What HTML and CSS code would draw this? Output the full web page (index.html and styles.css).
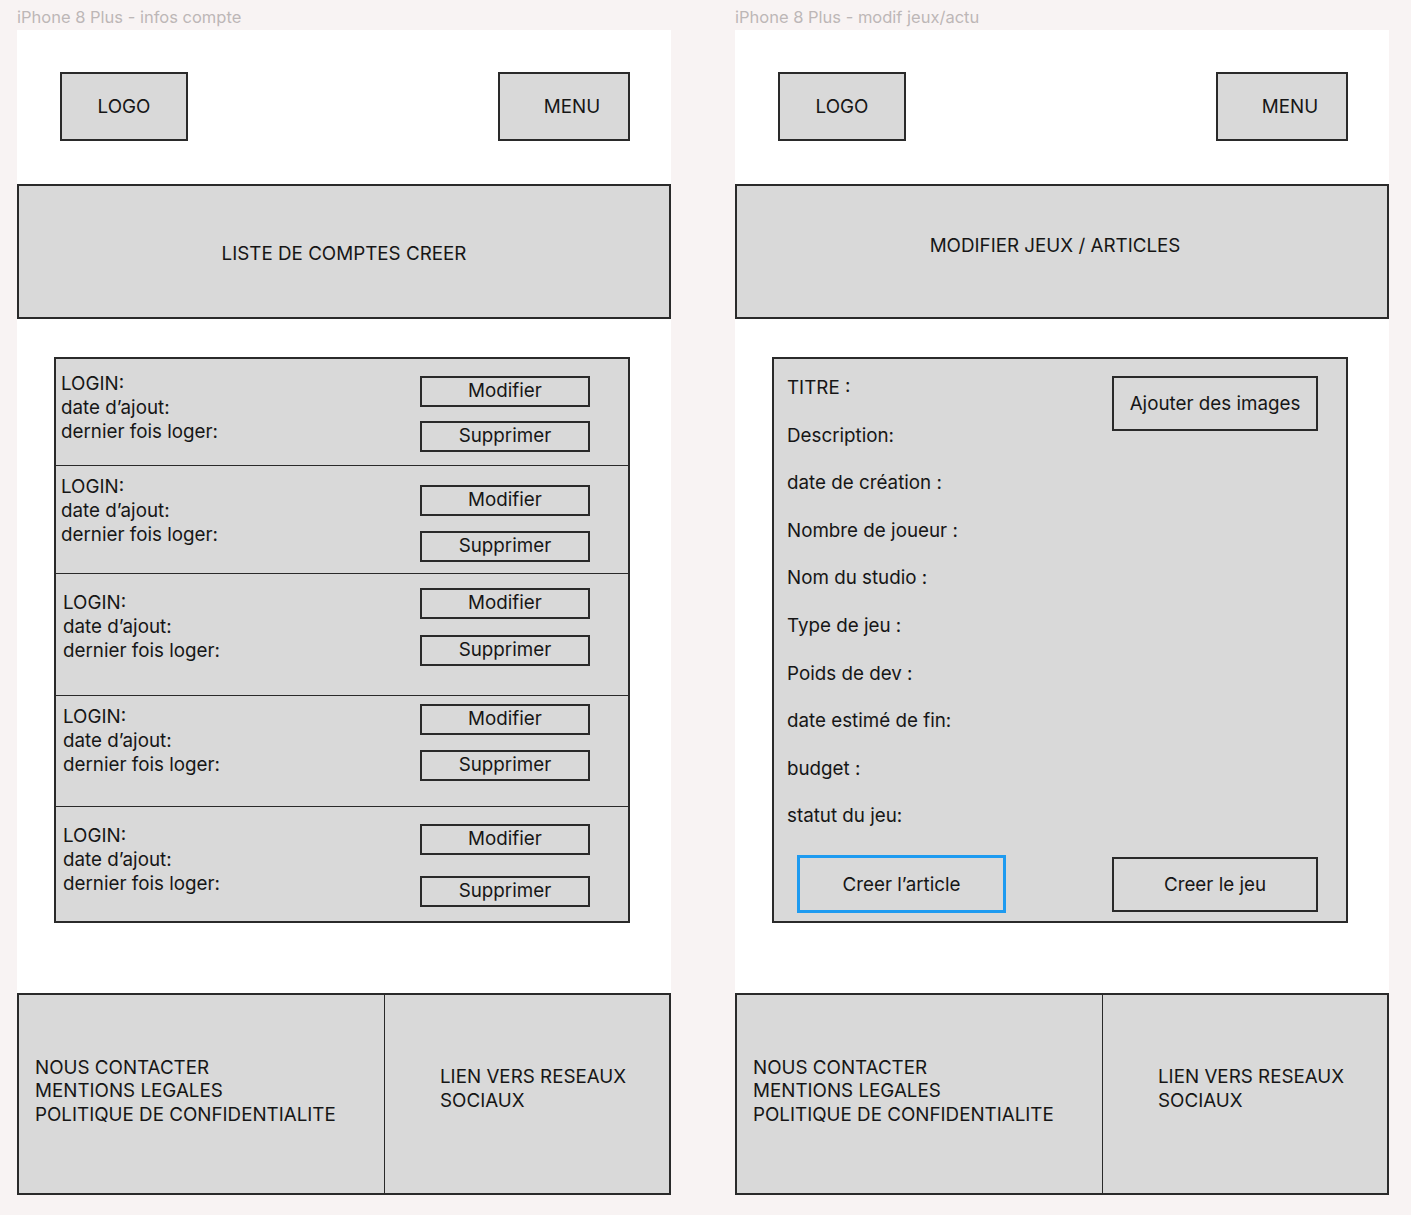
FILE: index.html
```html
<!DOCTYPE html>
<html lang="fr">
<head>
    <meta charset="UTF-8">
    <title>Maquettes</title>
    <link rel="stylesheet" href="styles.css">
</head>
<body>
<div class="canvas">
    <!-- maquette 1 : comptes -->
    <div class="board">
        <div class="boardName">iPhone 8 Plus - infos compte</div>
        <div class="frame">
            <div class="header">
                <div class="box logo">LOGO</div>
                <div class="box menu">MENU</div>
            </div>
            <div class="banner">LISTE DE COMPTES CREER</div>

            <div class="list">
                <div class="row row1">
                    <div class="info">LOGIN:<br>date d’ajout:<br>dernier fois loger:</div>
                    <div class="actions">
                        <div class="btn">Modifier</div>
                        <div class="btn">Supprimer</div>
                    </div>
                </div>
                <div class="row row2">
                    <div class="info">LOGIN:<br>date d’ajout:<br>dernier fois loger:</div>
                    <div class="actions">
                        <div class="btn">Modifier</div>
                        <div class="btn">Supprimer</div>
                    </div>
                </div>
                <div class="row row3">
                    <div class="info">LOGIN:<br>date d’ajout:<br>dernier fois loger:</div>
                    <div class="actions">
                        <div class="btn">Modifier</div>
                        <div class="btn">Supprimer</div>
                    </div>
                </div>
                <div class="row row4">
                    <div class="info">LOGIN:<br>date d’ajout:<br>dernier fois loger:</div>
                    <div class="actions">
                        <div class="btn">Modifier</div>
                        <div class="btn">Supprimer</div>
                    </div>
                </div>
                <div class="row row5">
                    <div class="info">LOGIN:<br>date d’ajout:<br>dernier fois loger:</div>
                    <div class="actions">
                        <div class="btn">Modifier</div>
                        <div class="btn">Supprimer</div>
                    </div>
                </div>
            </div>

            <div class="footer">
                <div class="footLeft">NOUS CONTACTER<br>MENTIONS LEGALES<br>POLITIQUE DE CONFIDENTIALITE</div>
                <div class="footRight">LIEN VERS RESEAUX<br>SOCIAUX</div>
            </div>
        </div>
    </div>

    <!-- maquette 2 : jeux / articles -->
    <div class="board">
        <div class="boardName">iPhone 8 Plus - modif jeux/actu</div>
        <div class="frame">
            <div class="header">
                <div class="box logo">LOGO</div>
                <div class="box menu">MENU</div>
            </div>
            <div class="banner bannerUp">MODIFIER JEUX / ARTICLES</div>

            <div class="form">
                <div class="formTop">
                    <div class="fields">
                        <div>TITRE :</div>
                        <div>Description:</div>
                        <div>date de création :</div>
                        <div>Nombre de joueur :</div>
                        <div>Nom du studio :</div>
                        <div>Type de jeu :</div>
                        <div>Poids de dev :</div>
                        <div>date estimé de fin:</div>
                        <div>budget :</div>
                        <div>statut du jeu:</div>
                    </div>
                    <div class="bigBtn">Ajouter des images</div>
                </div>
                <div class="formBottom">
                    <div class="bigBtn selected">Creer l’article</div>
                    <div class="bigBtn">Creer le jeu</div>
                </div>
            </div>

            <div class="footer">
                <div class="footLeft">NOUS CONTACTER<br>MENTIONS LEGALES<br>POLITIQUE DE CONFIDENTIALITE</div>
                <div class="footRight">LIEN VERS RESEAUX<br>SOCIAUX</div>
            </div>
        </div>
    </div>
</div>
</body>
</html>
```

FILE: styles.css
```css
body {
    margin: 0;
    background: #f8f3f3;
    font-family: Inter, "Liberation Sans", sans-serif;
    font-size: 18.8px;
    color: #161616;
}

.canvas {
    display: flex;
    gap: 64px;
    padding-left: 17px;
}

.boardName {
    height: 30px;
    line-height: 34px;
    font-size: 16.5px;
    color: #bdb7b7;
}

.frame {
    width: 654px;
    height: 1165px;
    background: #fff;
    display: flex;
    flex-direction: column;
}

/* entete */
.header {
    display: flex;
    justify-content: space-between;
    padding: 42px 41px 0 43px;
}

.box {
    height: 69px;
    box-sizing: border-box;
    border: 2px solid #2a2a2a;
    background: #d9d9d9;
    display: flex;
    align-items: center;
    justify-content: center;
}

.logo {
    width: 128px;
}

.menu {
    width: 132px;
    padding-left: 16px;
}

.banner {
    margin-top: 43px;
    height: 135px;
    box-sizing: border-box;
    border: 2px solid #2a2a2a;
    background: #d9d9d9;
    display: flex;
    align-items: center;
    justify-content: center;
    padding-top: 4px;
}

.bannerUp {
    padding: 0 14px 12px 0;
}

/* liste des comptes */
.list {
    margin: 38px 41px 0 37px;
    height: 566px;
    box-sizing: border-box;
    border: 2px solid #2a2a2a;
    background: #d9d9d9;
}

.row {
    display: flex;
    justify-content: space-between;
    box-sizing: border-box;
    border-bottom: 1.5px solid #2a2a2a;
    padding: 0 38px 0 5px;
}

.row:last-child {
    border-bottom: none;
}

.info {
    line-height: 24px;
}

.actions {
    display: flex;
    flex-direction: column;
    gap: 14px;
}

.btn {
    width: 170px;
    height: 31px;
    box-sizing: border-box;
    border: 2px solid #2a2a2a;
    text-align: center;
    line-height: 25px;
}

.row1 { height: 107px; padding-top: 13px; }
.row1 .actions { margin-top: 4px; }

.row2 { height: 108px; padding-top: 9px; }
.row2 .actions { margin-top: 10px; gap: 15px; }

.row3 { height: 122px; padding-top: 17px; padding-left: 7px; }
.row3 .actions { margin-top: -3px; gap: 16px; }

.row4 { height: 111px; padding-top: 9px; padding-left: 7px; }
.row4 .actions { margin-top: -1px; gap: 15px; }

.row5 { height: 118px; padding-top: 17px; padding-left: 7px; }
.row5 .actions { margin-top: 0; gap: 21px; }

/* formulaire jeu */
.form {
    margin: 38px 41px 0 37px;
    height: 566px;
    box-sizing: border-box;
    border: 2px solid #2a2a2a;
    background: #d9d9d9;
    display: flex;
    flex-direction: column;
}

.formTop {
    display: flex;
    justify-content: space-between;
    padding: 0 28px 0 13px;
}

.fields {
    padding-top: 5px;
}

.fields div {
    height: 47.6px;
    line-height: 47.6px;
}

.bigBtn {
    width: 206px;
    height: 55px;
    box-sizing: border-box;
    border: 2px solid #2a2a2a;
    display: flex;
    align-items: center;
    justify-content: center;
}

.formTop .bigBtn {
    margin-top: 17px;
}

.formBottom {
    margin-top: auto;
    display: flex;
    justify-content: space-between;
    align-items: center;
    padding: 0 28px 8px 23px;
}

.selected {
    width: 209px;
    height: 58px;
    border: 3px solid #1e9bf0;
}

/* pied de page */
.footer {
    margin-top: auto;
    height: 202px;
    box-sizing: border-box;
    border: 2px solid #2a2a2a;
    background: #d9d9d9;
    display: flex;
}

.footLeft {
    width: 366px;
    box-sizing: border-box;
    border-right: 1.5px solid #2a2a2a;
    padding-left: 16px;
    display: flex;
    align-items: center;
    line-height: 23.5px;
    padding-bottom: 6px;
}

.footRight {
    flex: 1;
    padding-left: 55px;
    display: flex;
    align-items: center;
    line-height: 24px;
    padding-bottom: 10px;
}
```
